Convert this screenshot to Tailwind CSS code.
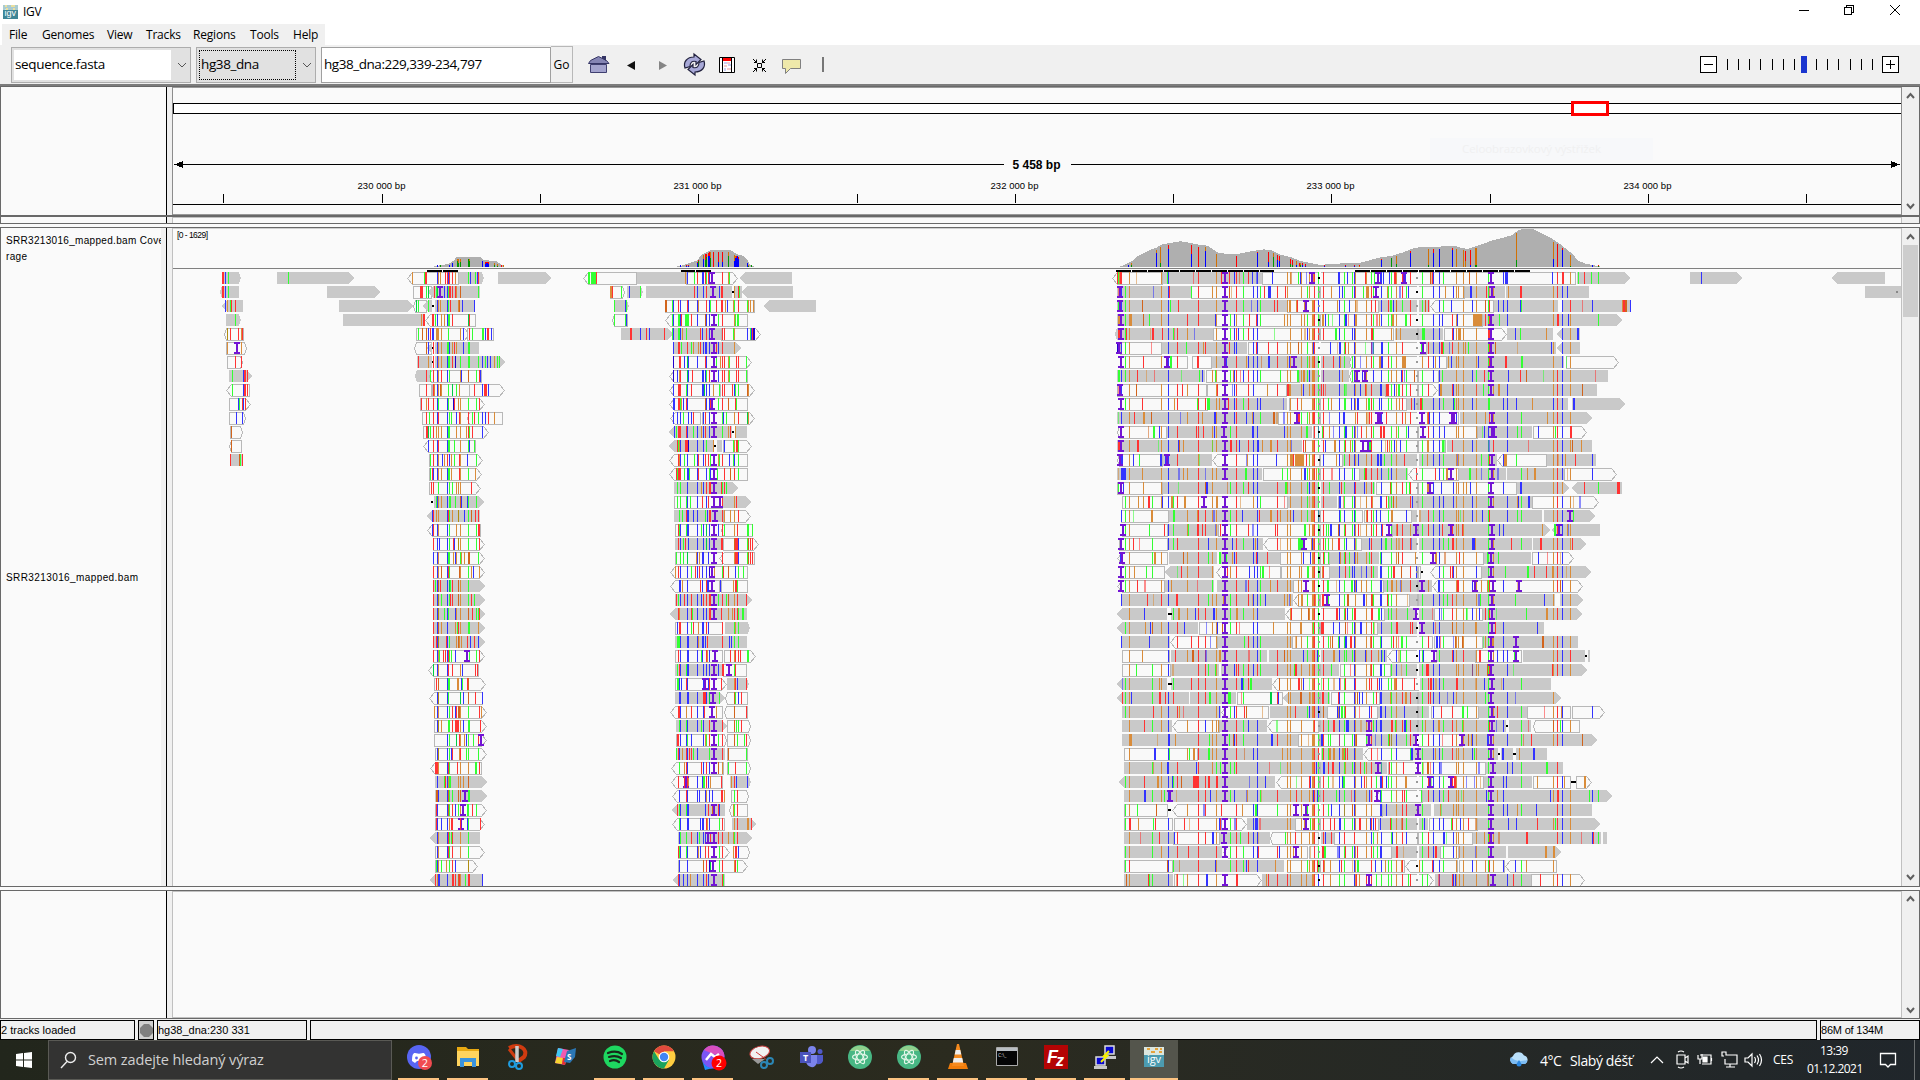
<!DOCTYPE html>
<html lang="cs">
<head>
<meta charset="utf-8">
<title>IGV</title>
<script src="https://cdn.jsdelivr.net/npm/@tailwindcss/browser@4"></script>
</head>
<body class="w-[1920px] h-[1080px] overflow-hidden bg-white text-black flex flex-col font-['Open_Sans','Noto_Sans',sans-serif]">

<!-- Title bar -->
<header class="h-6 shrink-0 flex items-center text-xs">
  <svg class="ml-[3px] mr-[5px]" width="15" height="14" viewBox="0 0 15 14"><rect width="15" height="14" fill="#3d8596"/><path d="M0 0h15v5H0z" fill="#a9cbd0"/><path d="M2 1h2M8 1h4M3 4h2M10 4h2" stroke="#e9dfa0" stroke-width="2"/><text x="1.5" y="11" font-size="9" fill="#fff" font-family="Liberation Sans">igv</text></svg>
  <span class="text-[12px] tracking-[-0.3px]">IGV</span>
  <svg class="ml-auto" width="130" height="24" viewBox="1790 0 130 24" fill="none" stroke="#000" shape-rendering="crispEdges"><path d="M1799 10.5h10M1844.5 7.5h7v7h-7zM1846.5 7V5.500h7v7h-2"/><path d="M1890 5l10 10M1900 5l-10 10" shape-rendering="auto"/></svg>
</header>

<!-- Menu bar -->
<nav class="h-[21px] shrink-0 flex pl-0.5">
  <div class="w-[323px] bg-[#f0f0f0] flex items-center text-[12px] tracking-[-0.2px] pl-[7px]">
    <span class="w-[33px]">File</span><span class="w-[65px]">Genomes</span><span class="w-[39px]">View</span><span class="w-[47px]">Tracks</span><span class="w-[57px]">Regions</span><span class="w-[43px]">Tools</span><span>Help</span>
  </div>
</nav>

<!-- Tool bar -->
<div class="h-[39px] shrink-0 bg-[#f0f0f0] flex items-center text-[13.500px]">
  <div class="ml-[11px] w-[180px] h-9 border border-[#adadad] bg-[#e1e1e1] flex items-center p-0.5">
    <div class="w-[157px] h-[30px] bg-white flex items-center pl-px tracking-[-0.35px]">sequence.fasta</div>
    <svg class="ml-1.5" width="10" height="8" fill="none" stroke="#555"><path d="M1 2l4 4 4-4"/></svg>
  </div>
  <div class="ml-[5px] w-[120px] h-9 border border-[#adadad] bg-[#e1e1e1] flex items-center p-0.5">
    <div class="w-[97px] h-[30px] border border-dotted border-black flex items-center pl-px tracking-[-0.4px]">hg38_dna</div>
    <svg class="ml-1.5" width="10" height="8" fill="none" stroke="#555"><path d="M1 2l4 4 4-4"/></svg>
  </div>
  <div class="ml-[5px] w-[230px] h-9 border border-[#a0a0a0] bg-white flex items-center pl-0.5 tracking-[-0.45px]">hg38_dna:229,339-234,797</div>
  <div class="w-[22px] h-[37px] border border-l-0 border-[#b8b8b8] flex items-center justify-center text-[12px]">Go</div>
  <svg class="ml-3" width="250" height="38" viewBox="585 46 250 38">
    <path d="M590.500 64.500h16v8h-16z" fill="#a3a3cd" stroke="#3f3f70"/><path d="M588.500 63.500l2-3 8-4 8 4 2.500 3z" fill="#8585b4" stroke="#353565" stroke-width="1"/><path d="M602 56h4v5l-4-3z" fill="#353565"/>
    <path d="M627 65.500l8-4.500v9z" fill="#111"/><path d="M667 65.500l-8-4.500v9z" fill="#858585"/>
    <g fill="#a8a9d8" stroke="#22223f" stroke-width="1.200"><path d="M685 68c-2-6 2-11 9-11v-3l7 5.500-5 5v-3c-4-1-6 1-6 5z"/><path d="M704 61c2 6-2 11-9 11v3l-7-5.500 5-5v3c4 1 6-1 6-5z"/></g>
    <path d="M719.500 57.500h15v15h-15z" fill="#fff" stroke="#000"/><path d="M722.500 57v16M731.500 57v16" stroke="#000"/><path d="M723 58h8v3h-8z" fill="red"/><path d="M724 62h3v2h-3zM728 64h3v2h-3zM724 68h2v3h-2z" fill="#c9cdf5"/><path d="M727 62h3v2h-3zM724 65h3v2h-3zM727 68h4v2h-4z" fill="#f5c9cd"/>
    <path d="M757.500 63.500h4v4h-4zM753 59l4 4M766 59l-4 4M753 72l4-4M766 72l-4-4M754 62.500h2.500v-3M765 62.500h-2.500v-3M754 68.500h2.500v3M765 68.500h-2.500v3" fill="none" stroke="#000"/>
    <path d="M782.500 59.500h18v9h-10l-5 5v-5h-3z" fill="#eee8aa" stroke="#808080"/>
    <path d="M822 57h2v15h-2z" fill="#777"/>
  </svg>
  <svg class="ml-auto" width="230" height="38" viewBox="1690 46 230 38" shape-rendering="crispEdges">
    <path d="M1700.500 56.500h16v16h-16zM1882.500 56.500h16v16h-16z" fill="#fff" stroke="#000"/><path d="M1704 64.500h9M1886 64.500h9M1890.500 60v9" stroke="#000"/>
    <path d="M1727.500 59v11M1738.500 59v11M1749.500 59v11M1760.500 59v11M1772.500 59v11M1783.500 59v11M1794.500 59v11M1816.500 59v11M1827.500 59v11M1838.500 59v11M1850.500 59v11M1861.500 59v11M1872.500 59v11" stroke="#000"/>
    <path d="M1801 56h6v17h-6z" fill="#1a35cf"/>
  </svg>
</div>
<div class="h-[3px] shrink-0 bg-[#7c7c7c] border-b border-[#696969]"></div>

<!-- Ideogram and ruler -->
<section class="h-32 shrink-0 flex bg-[#fafafa]">
  <div class="w-[166px] border-l border-[#696969]"></div>
  <div class="w-[7px] bg-[#f0f0f0] border-l border-l-black border-r border-r-[#8c8c8c]"></div>
  <svg width="1728" height="128" viewBox="173 87 1728 128" shape-rendering="crispEdges" font-family="Liberation Sans, Arial, sans-serif">
    <path d="M173 87.500h1728M173 214.500h1728" stroke="#999"/>
    <rect x="173.500" y="103.500" width="1728" height="10" fill="#fff" stroke="#000"/>
    <rect x="1572.500" y="102.500" width="35" height="12" fill="#fff" stroke="red" stroke-width="3"/>
    <rect x="1430" y="138" width="223" height="22" fill="#f7f8fa"/><text x="1462" y="153" font-size="11.500" fill="#f0f0f1" font-family="Open Sans" textLength="139">Celoobrazovkový výstřižek</text>
    <path d="M174 164.500h830M1071 164.500h829M173 204.500h1728" stroke="#000"/>
    <path d="M174 164.500l9-3.500v7zM1900 164.500l-9-3.500v7z"/>
    <text x="1036.500" y="169" font-size="12" font-weight="bold" text-anchor="middle" textLength="48">5 458 bp</text>
    <g id="ruler" font-size="9.500" text-anchor="middle"></g>
  </svg>
  <div class="w-[19px] bg-[#f0f0f0] border-l border-[#8c8c8c] border-r border-r-[#696969] flex flex-col justify-between items-center py-[5px]">
    <svg width="9" height="8" fill="none" stroke="#606060" stroke-width="2"><path d="M1 6l3.500-4L8 6"/></svg>
    <svg width="9" height="8" fill="none" stroke="#606060" stroke-width="2"><path d="M1 2l3.500 4L8 2"/></svg>
  </div>
</section>
<div class="h-0.5 shrink-0 bg-[#696969]"></div>
<div class="h-[7px] shrink-0 flex bg-[#fafafa] border-b border-[#696969]">
  <div class="w-[166px] border-l border-[#696969]"></div><div class="w-[7px] bg-[#f0f0f0] border-l border-l-black border-r border-r-[#c0c0c0]"></div><div class="w-[1728px] border-t border-[#c0c0c0]"></div><div class="w-[19px] bg-[#f0f0f0] border-x border-[#696969] border-l-[#c0c0c0]"></div>
</div>
<div class="h-1 shrink-0 bg-[#fafafa] border-b border-[#696969]"></div>

<!-- Tracks -->
<section class="h-[658px] shrink-0 flex bg-[#fafafa]">
  <div class="w-[166px] border-l border-[#696969] flex font-['Liberation_Sans',Arial,sans-serif]">
    <svg class="bg-[#fafafa]" width="160" height="658" viewBox="1 228 160 658" font-size="10" fill="#000">
      <text x="6" y="244" textLength="158">SRR3213016_mapped.bam Cove</text>
      <text x="6" y="260" textLength="21">rage</text>
      <text x="6" y="581" textLength="132">SRR3213016_mapped.bam</text>
    </svg>
    <div class="flex-1 bg-[#f0f0f0]"></div>
  </div>
  <div class="w-[7px] bg-[#f0f0f0] border-l border-l-black border-r border-r-[#c0c0c0]"></div>
  <svg id="tracks" width="1728" height="658" viewBox="173 228 1728 658" shape-rendering="crispEdges"></svg>
  <div class="w-[19px] bg-[#f0f0f0] border-l border-[#c0c0c0] border-r border-r-[#696969] flex flex-col items-center py-[5px]">
    <svg width="9" height="8" fill="none" stroke="#606060" stroke-width="2"><path d="M1 6l3.500-4L8 6"/></svg>
    <div class="mt-1 w-[15px] h-[72px] bg-[#cdcdcd]"></div>
    <svg class="mt-auto" width="9" height="8" fill="none" stroke="#606060" stroke-width="2"><path d="M1 2l3.500 4L8 2"/></svg>
  </div>
</section>
<div class="h-[5px] shrink-0 bg-[#fafafa] border-y border-[#696969]"></div>

<!-- Empty feature panel -->
<section class="h-[127px] shrink-0 flex bg-[#fafafa]">
  <div class="w-[166px] border-l border-[#696969]"></div>
  <div class="w-[7px] bg-[#f0f0f0] border-l border-l-black border-r border-r-[#c0c0c0]"></div>
  <div class="w-[1728px] border-y border-[#c0c0c0]"></div>
  <div class="w-[19px] bg-[#f0f0f0] border-l border-[#c0c0c0] border-r border-r-[#696969] flex flex-col justify-between items-center py-[4px]">
    <svg width="9" height="8" fill="none" stroke="#606060" stroke-width="2"><path d="M1 6l3.500-4L8 6"/></svg>
    <svg width="9" height="8" fill="none" stroke="#606060" stroke-width="2"><path d="M1 2l3.500 4L8 2"/></svg>
  </div>
</section>
<div class="h-0.5 shrink-0 bg-[#696969] border-b border-[#f0f0f0]"></div>

<!-- Status bar -->
<footer class="h-5 shrink-0 bg-[#f0f0f0] flex gap-[3px] font-['Liberation_Sans',Arial,sans-serif] text-[11px] leading-[18px] whitespace-nowrap">
  <div class="w-[135px] border border-black">2 tracks loaded</div>
  <div class="w-4 border border-black flex items-center justify-center bg-[#d0d0d0]"><svg width="13" height="15"><path d="M4 1h5l4 4v5l-4 4H4L0 10V5z" fill="#808080"/></svg></div>
  <div class="w-[150px] border border-black">hg38_dna:230 331</div>
  <div class="w-[1507px] border border-black"></div>
  <div class="flex-1 border border-black tracking-[-0.2px]">86M of 134M</div>
</footer>

<!-- Task bar -->
<div class="h-10 shrink-0 flex bg-linear-to-r from-[#22261c] via-[#2b2b1f] to-[#20262b] text-white">
  <div class="w-12 flex items-center justify-center"><svg width="16" height="16" fill="#fff"><path d="M0 2l7-1v6.500H0zM8 1l8-1v7.500H8zM0 8.500h7V15l-7-1zM8 8.500h8V16l-8-1z"/></svg></div>
  <div class="w-[344px] bg-[#333332] border border-[#5a5a55] flex items-center text-[14.500px] text-[#d0d0d0]">
    <svg class="ml-[11px] mr-[11px]" width="17" height="18" fill="none" stroke="#eee" stroke-width="1.400"><circle cx="10.500" cy="6.500" r="5"/><path d="M7 10.500L1 17"/></svg>
    <span class="tracking-[-0.12px]">Sem zadejte hledaný výraz</span>
  </div>
  <div id="apps" class="flex ml-[2px]">
    <div class="w-[49px] px-1 flex flex-col items-center justify-end"><svg width="28" height="30" viewBox="-14 -14 28 30"><circle r="12" cy="0" fill="#5865f2"/><path d="M-7 4c0-6 1-8 3-8l4 .8 4-.8c2 0 3 2 3 8l-3 2-2-2h-4l-2 2z" fill="#fff"/><circle cx="-2.500" cy="1" r="1.400" fill="#5865f2"/><circle cx="6" cy="6" r="7" fill="#f04b50"/><text x="6" y="10" font-size="11" fill="#fff" text-anchor="middle">2</text></svg><div class="h-0.5 w-full mt-[5px] bg-[#fcc381]"></div></div>
    <div class="w-[49px] px-1 flex flex-col items-center justify-end"><svg width="28" height="30" viewBox="-14 -14 28 30"><path d="M-11-10h9l2 2h11V9h-22z" fill="#e8a912"/><path d="M-11-6h22V9h-22z" fill="#ffd45e"/><path d="M-8 10V1H8v9H4V5h-8v5z" fill="#3a93dc"/></svg><div class="h-0.5 w-full mt-[5px] bg-[#fcc381]"></div></div>
    <div class="w-[49px] px-1 flex flex-col items-center justify-end"><svg width="28" height="30" viewBox="-14 -14 28 30"><path d="M-8-9C2-14 12-8 7 0L0 5" fill="none" stroke="#cf3b10" stroke-width="4"/><path d="M-8-8L3 6" stroke="#cf3b10" stroke-width="3"/><path d="M0-11V5" stroke="#ccc" stroke-width="3.500"/><circle cx="-5" cy="7" r="3" fill="none" stroke="#1f9cdf" stroke-width="2"/><circle cx="2" cy="9" r="3" fill="none" stroke="#1f9cdf" stroke-width="2"/></svg><div class="h-0.5 mt-[5px]"></div></div>
    <div class="w-[49px] px-1 flex flex-col items-center justify-end"><svg width="28" height="30" viewBox="-14 -14 28 30"><path d="M-8-9L3-7-1 8-11 6z" fill="#f05ab0"/><path d="M-8-9l5 1-3 8-4-1z" fill="#3fc8f5"/><path d="M-9 0l6 1-1 6-7-1z" fill="#f6d52f"/><path d="M-3 1h3l-1 7-3-1z" fill="#e8302c"/><path d="M1-6l9-3-1 9-5 6-6-1z" fill="#2b77b5"/><text x="1" y="3" font-size="8" font-weight="bold" fill="#fff">S</text></svg><div class="h-0.5 mt-[5px]"></div></div>
    <div class="w-[49px] px-1 flex flex-col items-center justify-end"><svg width="28" height="30" viewBox="-14 -14 28 30"><circle r="11.500" fill="#1ed760"/><path d="M-7-4q8-3 14 1M-6 0q7-2 12 1M-5 4q5-2 9 1" fill="none" stroke="#18281b" stroke-width="2.200" stroke-linecap="round"/></svg><div class="h-0.5 w-full mt-[5px] bg-[#fcc381]"></div></div>
    <div class="w-[49px] px-1 flex flex-col items-center justify-end"><svg width="28" height="30" viewBox="-14 -14 28 30"><circle r="11.500" fill="#ffcd40"/><path d="M0 0L-10-5.700A11.500 11.500 0 0 1 10-5.700H0z" fill="#e04a3d"/><path d="M-10-5.700A11.500 11.500 0 0 0 0 11.500L5 2.800-5 2.500z" fill="#1ba35d"/><circle r="5.300" fill="#fff"/><circle r="4.200" fill="#4285f4"/></svg><div class="h-0.5 w-full mt-[5px] bg-[#fcc381]"></div></div>
    <div class="w-[49px] px-1 flex flex-col items-center justify-end"><svg width="28" height="30" viewBox="-14 -14 28 30"><circle r="11.500" fill="#7b56f5"/><path d="M-9-7A11.500 11.500 0 0 1 11.500 0L0-3z" fill="#d84fc0"/><path d="M-11 3A11 11 0 0 0 0 11l-8 2z" fill="#1f8cff"/><path d="M-7 3l5-6 4 3 4-3" stroke="#fff" stroke-width="2.500" fill="none"/><circle cx="6" cy="6" r="7.500" fill="#f00"/><text x="6" y="10" font-size="10.500" fill="#fff" text-anchor="middle">2</text></svg><div class="h-0.5 w-full mt-[5px] bg-[#fcc381]"></div></div>
    <div class="w-[49px] px-1 flex flex-col items-center justify-end"><svg width="28" height="30" viewBox="-14 -14 28 30"><ellipse cx="-1" cy="-5" rx="10" ry="6" fill="#f1f1f1" stroke="#c94040" transform="rotate(-15)"/><path d="M-10 2l13 0-7 5z" fill="#999"/><path d="M-6-5L5 3" stroke="#c33"/><circle cx="2" cy="8" r="3" fill="none" stroke="#2b86b5" stroke-width="2"/><circle cx="8" cy="4" r="3" fill="none" stroke="#2b86b5" stroke-width="2"/></svg><div class="h-0.5 mt-[5px]"></div></div>
    <div class="w-[49px] px-1 flex flex-col items-center justify-end"><svg width="28" height="30" viewBox="-14 -14 28 30"><circle cx="1" cy="-7" r="4" fill="#7b83eb"/><circle cx="9" cy="-5.500" r="2.500" fill="#5059c9"/><path d="M5-2h7v6q-2 4-6 3z" fill="#5059c9"/><path d="M-5-2H6v8q-2 5-6 4t-5-5z" fill="#7b83eb"/><path d="M-11-5H0V6h-11z" fill="#4b53bc"/><text x="-5.500" y="4" font-size="9" font-weight="bold" fill="#fff" text-anchor="middle">T</text></svg><div class="h-0.5 mt-[5px]"></div></div>
    <div class="w-[49px] px-1 flex flex-col items-center justify-end"><svg width="28" height="30" viewBox="-14 -14 28 30"><circle r="12" fill="#48b784"/><path d="M-10-6A12 12 0 0 1 10-6z" fill="#8fd08c"/><g fill="none" stroke="#e4f7e9" stroke-width="1.200"><ellipse rx="7.500" ry="3"/><ellipse rx="7.500" ry="3" transform="rotate(60)"/><ellipse rx="7.500" ry="3" transform="rotate(120)"/></g></svg><div class="h-0.5 mt-[5px]"></div></div>
    <div class="w-[49px] px-1 flex flex-col items-center justify-end"><svg width="28" height="30" viewBox="-14 -14 28 30"><circle r="12" fill="#48b784"/><path d="M-10-6A12 12 0 0 1 10-6z" fill="#8fd08c"/><g fill="none" stroke="#e4f7e9" stroke-width="1.200"><ellipse rx="7.500" ry="3"/><ellipse rx="7.500" ry="3" transform="rotate(60)"/><ellipse rx="7.500" ry="3" transform="rotate(120)"/></g></svg><div class="h-0.5 w-full mt-[5px] bg-[#fcc381]"></div></div>
    <div class="w-[49px] px-1 flex flex-col items-center justify-end"><svg width="28" height="30" viewBox="-14 -14 28 30"><path d="M-8 6H8l2 6h-20z" fill="#f07c0a"/><path d="M-1-13h2L6 9H-6z" fill="#f58a1e"/><path d="M-2.300-7h4.600l1 4.500h-6.600zM-4.200 1h8.400l1 4.500H-5.200z" fill="#eee"/></svg><div class="h-0.5 w-full mt-[5px] bg-[#fcc381]"></div></div>
    <div class="w-[49px] px-1 flex flex-col items-center justify-end"><svg width="28" height="30" viewBox="-14 -14 28 30"><path d="M-10.500-9.500h21v18h-21z" fill="#050505" stroke="#aaa"/><path d="M-10-9h20v3h-20z" fill="#b9bec2"/><text x="-9" y="-.5" font-size="5" fill="#ddd">C:\_</text></svg><div class="h-0.5 w-full mt-[5px] bg-[#fcc381]"></div></div>
    <div class="w-[49px] px-1 flex flex-col items-center justify-end"><svg width="28" height="30" viewBox="-14 -14 28 30"><path d="M-12-12h24v24h-24z" fill="#b40404"/><text x="-9" y="6" font-size="18" font-weight="bold" font-style="italic" fill="#fff" font-family="Liberation Sans">F</text><text x="0" y="9" font-size="16" font-weight="bold" font-style="italic" fill="#fff" font-family="Liberation Sans">z</text></svg><div class="h-0.5 w-full mt-[5px] bg-[#fcc381]"></div></div>
    <div class="w-[49px] px-1 flex flex-col items-center justify-end"><svg width="28" height="30" viewBox="-14 -14 28 30"><g stroke="#ddd" stroke-width="1.500" fill="#0808d0"><path d="M0-11h9v8H0zM-9 0h9v8h-9z"/></g><path d="M0-1h11v3H0zM-11 9H2v3h-13z" fill="#c8c8c8"/><path d="M4-6L-1-1l3 0-6 6" stroke="#f6f000" stroke-width="2" fill="none"/></svg><div class="h-0.5 w-full mt-[5px] bg-[#fcc381]"></div></div>
    <div class="w-12 ml-px bg-[#54554c] flex flex-col items-center justify-end"><svg width="28" height="30" viewBox="-14 -14 28 30"><path d="M-10-10h20v20h-20z" fill="#4c9bb0"/><path d="M-10-10h20v8h-20z" fill="#dbe6df"/><path d="M-7-8h3M1-8h3M6-8h2M-3-5h4M5-5h3" stroke="#e5a33c" stroke-width="2"/><text y="6" font-size="11" fill="#fff" text-anchor="middle">igv</text></svg><div class="h-0.5 w-full mt-[5px] bg-[#fcc381]"></div></div>
  </div>
  <div class="ml-auto flex items-center text-[14px] whitespace-nowrap">
    <svg class="mr-2.5" width="22" height="18"><path d="M5 13a4.500 4.500 0 0 1 0-8A6 6 0 0 1 16 4.500a4.500 4.500 0 0 1 1 8.500z" fill="#b9dffa"/><path d="M5 13a4.500 4.500 0 0 1-2-7q5 6 16 3a4 4 0 0 1-2 4z" fill="#7dbcf3"/><path d="M11 9l2.500 4a2.500 2.500 0 1 1-5 0z" fill="#2a86df"/></svg>
    <span class="w-[30px] tracking-[-0.5px]">4°C</span><span class="w-[80px] tracking-[-0.4px]">Slabý déšť</span>
    <svg width="115" height="20" viewBox="1650 1050 115 20" fill="none" stroke="#fff" stroke-width="1.200"><path d="M1651 1063l6-6 6 6M1677 1055h8v9h-8zM1685 1058l3-2v7l-3-2M1678 1052q3-2 6 0M1678 1067q3 2 6 0M1700 1055h11v9h-9M1711.500 1058v3M1698 1055v4h4v-5M1700 1059v5M1724 1056h-2v-4h4v3h11v9h-12v-5M1730 1064v3M1726 1067h9M1745 1058h3l4-4v12l-4-4h-3zM1754.500 1057q2 3 0 6M1757 1055.500q3 4.500 0 9M1759.500 1054q4 6 0 12"/><path d="M1703 1057h4v5h-4z" fill="#fff"/></svg>
    <span class="ml-2 text-[12px] w-[34px] tracking-[-0.3px]">CES</span>
    <div class="w-[54px] text-center text-[12px] leading-[18px] tracking-[-0.55px]">13:39<br>01.12.2021</div>
    <svg class="ml-[18px] mr-[17px]" width="18" height="18" fill="none" stroke="#fff" stroke-width="1.300"><path d="M1.500 2.500h15v11h-5l-2.500 2.500-2.500-2.500h-5z"/></svg>
    <div class="h-10 w-px bg-[#6b6f70] mr-[5px]"></div>
  </div>
</div>

<script>
// Ruler: a tick every 500 bp, a label every 1000 bp.
let ruler = '';
[223,382,540,698,857,1015,1173,1331,1490,1648,1806].forEach((x, i) => {
  ruler += `<path d="M${x + .5} 194v9" stroke="#000"/>`;
  if (i % 2) ruler += `<text x="${x - .5}" y="189" textLength="48">${230 + (i - 1) / 2} 000 bp</text>`;
});
document.getElementById('ruler').innerHTML = ruler;

const COLORS = {r:'#f33', g:'#3f3', b:'#33f', o:'#d98c3a', t:'#d2641c', n:'#0c4', k:'#000', d:'#20c', y:'#b08c10'};
const ROW_TOP = 272, ROW_PITCH = 14;
let out = '';
const rect = (x, y, w, h, f, o) => { out += `<rect x="${x}" y="${y}" width="${w}" height="${h}" fill="${f}"${o ? ` opacity="${o}"` : ''}/>`; };
let seed = 4177;
const rnd = () => (seed = (seed * 16807) % 2147483647) / 2147483647;

// Coverage profile: x and height in thirds of a pixel from an origin.
function coverage(origin, pts, marks) {
  const h = x => { for (let i = 1; i < pts.length; i++) if (x <= pts[i][0]) { const [a, b] = [pts[i-1], pts[i]]; return b[1] + (a[1] - b[1]) * (b[0] - x) / (b[0] - a[0]); } return 0; };
  for (let x = pts[0][0]; x < pts[pts.length - 1][0]; x += 3) { const v = Math.max(1, Math.round(h(x) / 3)); rect(origin + Math.round(x / 3), 267 - v, 1, v, '#afafaf'); }
  const C = {r:'#f00', b:'#00f', n:'#009600', o:'#d17105'};
  marks.split(' ').forEach(m => { const [, a, b, x, f] = m.match(/([a-z])([a-z])(\d+)\.(\d)/); const v = Math.max(2, Math.round(h(+x) / 3) - 2), X = origin + Math.round(x / 3), k = Math.round(v * f / 10); rect(X, 267 - v, 1, v, C[a]); rect(X, 267 - k, 1, k, C[b]); });
}
coverage(160, [[822,2],[845,6],[865,10],[880,20],[888,29],[960,29],[970,21],[1010,17],[1020,8],[1032,1]], 'bb831.9 nn840.9 bb867.9 ob876.9 on891.7 on894.5 on900.6 nn924.9 on927.8 bb966.9 rb975.6 rb978.8 rb981.8 rb984.5 on1002.6 on1011.4 rr1023.9 oo1029.9');
coverage(580, [[290,2],[305,5],[325,12],[350,20],[360,36],[372,42],[388,50],[450,50],[465,40],[490,32],[500,22],[505,9],[520,2]], 'bb300.9 rb318.6 rb324.4 rb351.8 rn354.8 ob369.7 rn375.5 rn378.8 rb384.8 rb387.7 on390.6 rr399.9 rb414.3 rb426.3 on444.7 ob462.5 ob465.8 rb468.8 bb471.9 rb474.8 bb501.9 on504.3 nn513.9');
coverage(1100, [[60,1],[80,10],[95,18],[105,28],[125,40],[150,52],[168,58],[185,68],[210,72],[240,77],[270,72],[300,66],[320,64],[333,56],[350,44],[375,40],[410,39],[440,45],[470,50],[490,53],[515,50],[540,37],[575,28],[600,18],[640,10],[660,6],[690,9],[730,11],[780,13],[805,19],[830,27],[875,34],[905,43],[935,55],[960,60],[1010,60],[1035,63],[1060,64],[1080,58],[1100,54],[1120,60],[1150,70],[1175,80],[1210,88],[1235,96],[1250,108],[1262,113],[1300,113],[1320,102],[1350,88],[1370,75],[1390,60],[1410,44],[1435,18],[1455,10],[1480,5],[1500,1]],
 'bb84.9 on93.4 ob168.8 on180.2 rb204.8 rb273.6 rr294.9 ob315.8 oo348.9 rr408.9 rb471.9 rb504.3 on519.7 rb531.6 rb537.5 rn570.4 rn576.3 ob588.4 ro597.3 on600.5 rb606.5 rb615.4 rb672.4 rb735.5 rb762.5 ro777.3 rb844.9 nn874.9 on889.3 rb931.9 on985.1 rb1000.8 bb1018.9 rb1057.9 oo1069.9 oo1090.9 ro1096.4 rb1111.1 on1126.1 on1129.1 on1249.2 ob1360.3 rr1372.9 rb1387.9 on1411.1 bb1477.9 rn1495.3');
rect(173, 228, 1728, 1, '#d0d0d0');
rect(173, 268, 1728, 1, '#808080');
[[427,442],[443,458],[681,695],[696,711]].forEach(([a, b]) => rect(a, 270, b - a, 2, '#000'));
for (let x = 1116; x < 1274; x += 16) rect(x, 270, Math.min(15, 1274 - x), 2, '#000');
for (let x = 1355; x < 1529; x += 16) rect(x, 270, 15, 2, '#000');

// One row of reads. Spans are g/w (plain / ambiguous) with start-end and arrow
// marks; the rest are mismatches (colour, x, .width), I insertions, k gaps.
function readRow(row, origin, text) {
  const y = ROW_TOP + row * ROW_PITCH, spans = [];
  const marks = [];
  text.trim().split(/\s+/).forEach(t => {
    let m = t.match(/^([gw])(-?\d+)-(\d+)([<>{}]*)$/);
    if (m) {
      const a = origin + Math.round(m[2] / 3), b = origin + Math.round(m[3] / 3);
      const l = m[4].includes('<') ? 5 : m[4].includes('{') ? 2 : 0, r = m[4].includes('>') ? 5 : m[4].includes('}') ? 2 : 0;
      spans.push([a + l, b - r]);
      if (m[1] === 'g') out += `<path d="M${a + l} ${y}H${b - r}L${b} ${y + 6}L${b - r} ${y + 12}H${a + l}L${a} ${y + 6}z" fill="#c9c9c9"/>`;
      else out += `<path d="M${a + l + .5} ${y + .5}H${b - r - .5}L${b - .5} ${y + 6.5}L${b - r - .5} ${y + 12.5}H${a + l + .5}L${a + .5} ${y + 6.5}z" fill="#f9f9f9" stroke="#b8b8b8"/>`;
    } else marks.push(t);
  });
  return { y, spans, marks };
}
function drawMarks(row, origin, marks) {
  const y = ROW_TOP + row * ROW_PITCH;
  marks.forEach(t => {
    const m = t.match(/^([a-zI])(\d+)(?:\.(\d))?$/);
    if (!m) return;
    const x = origin + Math.round(m[2] / 3);
    if (m[1] === 'I') { rect(x - 1, y, 2, 12, '#7314d4'); rect(x - 3, y, 6, 2, '#7314d4'); rect(x - 3, y + 10, 6, 2, '#7314d4'); }
    else if (m[1] === 'k') { rect(x - 1, y, 3, 12, '#fafafa'); rect(x - 1, y + 5, m[3] || 2, 2, '#000'); }
    else rect(x, y, +(m[3] || 1), 12, COLORS[m[1]]);
  });
}
const inside = (spans, x) => spans.some(([a, b]) => x >= a && x < b - 1);

// Fully listed rows: groups at 229.5, 230 kb (origin 160) and 231 kb (origin 580).
const left = [
 'g186-242} r186.2 r189 b195 g205 g351-582> g384 w740-898< g898-971} g1014-1173> o756 g793 r796.2 b831 o834 o840 r855 r861 b865 r867 r876 o885 g924 b931 g945 b951 r954',
 'g180-237{ r186.2 r189 b195 g205 g501-659> w760-817 g805-959< r780.3 g798 n804 r822 g829 n832 b852 b861 g864 r867.2 r876 r885 o888 t900 g954 I839',
 'g186-249< b195 o201 g209 r213 r225 g537-758> w758-802{ n768 g774 g790-944< g804 k818 b831 o834 o840 b861 g864 r870 o894 t897 b906 b942',
 'g198-242} g225 g549-795 o783 r789 r793 w795-947< r816.2 g825 b831 o843 o852 b861 g864.2 r876 n924 r927',
 'w193-251{ y201 r210 r234 o243 r246 w768-930> w920-1001 g774 t786 t798 b804 r810 b816.2 o828.2 o834 o843 g864 o900 b909 r927 g936 g966.2 b975 r981.2 b993',
 'w198-260} o201 o243 I231 w763-815{ t798 b804 g800-957< k818 r819 b831.2 o834 o843 g861.2 b867 o876 r882 o888 b909 g924.2',
 'w201-250} r225 r243 g771-1034> r774 o804 k818 r819 b831 o834 o843 b861 g864.2 r876 d885 g900 g924.2 g954 b966 g975 b981 b990 o1002 g1011 g1017',
 'g207-276> g216 b249 r252.2 r261 g765-815{ r798 g810 w807-965{ r819 b831 o834 r843 b861 g867 o900 b903 t924 g948 r957 b960',
 'w199-269< g216 b249 r252.2 r261 w777-817 r798 w817-930 w928-1034> r819 o822 b831 o834 t840 o843 g864 n876 g888 o897 r942 b966 r972.3 b984',
 'w207-273> b234 g237 r246 b249 r255 w780-976> r783 o798 r804 r819 b831 g834 b861 g864 d879 r882 o894 o900 g924 g948 r957',
 'w207-257} b228 b246 w786-930 w922-1030{ r798 g807 r819 b831 r834 b861 g867 g873 b888 r897 o900 r924 g936 r942 g954 b966 b975 r984 o1002',
 'w210-248} t213 w789-986> r798.2 n804 g810 r819 o828 o834 o843 b861 g864.2 o888 o900 o918 r924 g927 r936 b966',
 'w207-245{ t213 w790-947< b804 r819 b831 r834 b861 g864.2 g882 o900 b927 g924 g942',
 'g210-248 r210 t237 g240 r246 w807-968> g810 r819 b831 o834 b846 o852 r861 b867 o873 g882 r897 o900 b921 g948',
 'w807-965> g810 r816 b819 b831 o834 o843 b861 g864.2 o873 r897 o900 g924 o945'];
const mid = [
 'w10-170< g24.2 g33.2 g39.3 r48 g170-320 w318-475> g479-636< o315 b321 g342 r351 b366.2 r375 g378 r384 b387 r426 o444 g447 I397',
 'w90-134} o90.2 r96 g123 g141-188} b147 g180 g198-340 g328-487 g485-639< r342 b351 b369 r378 b417 r423.2 k460 o462 r474 g477 I399',
 'g102-146} g102 b135 g138 w255-525 g553-708< t255 t258 g276 b279 r294 b300 r321 b324 b351 o354 r378 b387 g390 r408 r423.2 o435 b441 o459 g462 r474 g501 o504 o510 o519',
 'w97-143{ g102 g135 b138 w256-503< g276 b279 g294.2 b300 r303 g315.4 r333 b351 t375 b378 b387 g414 r426 o462 g465 g471.2 I402',
 'g123-280> r150.2 b180 r198 b207 r252 g276-425 w423-542> g276 b279 g294.2 b300 o306 g318 r360 b366 r378 b387 r426 r432 g459 o462 b501 g510 b513 d519.2 r516 I397',
 'g279-483> b279 r294.2 g303 r321 g333 o339 o354 r360 b369 b375.2 b387 r408 b414 r426 o462 I402',
 'w279-515> d279 r297 r300 b312 n321 b324 b351 r375 b378 r399 g408 o420 r426 r432 o444 g447 r468 r474 g498 I402',
 'w268-503< d279 b291 o297 r300 n321 b324 r336 b366.2 b375 g378 r387 b414 r426 r432 o444 g447 r468 r474 g498 I402',
 'w268-422< w425-524> b279 r294.2 r300 g318 b321 r333 b366.2 n372 b378 b387 o399 g417 r426 r432 r456 b462 g465 g474 t501 o504',
 'w268-503< b279.2 r294.2 g300 o303 b309 r318 b321 t375 b378 b387 r390 g414 r426 t444 r465 g468 I397',
 'w270-362< w366-524> b279 b291 b300 g309 b324 b333 r339 b369 r375 b387 g426 b429 g438 o462 r474 n501 o504 I402',
 'g268-501< b282 g288 r294.2 r300 r318 b321 g339 b351 o363 b369 r375 b387 g426 o444 r450 k460 o465 I402',
 'g268-427< w429-515> r291 g294 o297 b300 r315.3 d324 b351 b369 g378 o399 k404 b432 g459 o462 r468.2 g474',
 'w268-503< r294 o297 b300 g312 b321 g342 b351 r354 b369 r375 r384 g390 o414 g417 r426 b447 g459 b462 g474 I402',
 'w268-503< r288 g291 r294.2 r300 g312 b321.2 g327 b351 r354 b378 g387 b390 g411 r432 t450 r462 g474 I402'];
left.forEach((t, r) => drawMarks(r, 160, readRow(r, 160, t).marks));
mid.forEach((t, r) => drawMarks(r, 580, readRow(r, 580, t).marks));

// The same two groups from row 15 down, on one origin.
const lower = [
 'w58-214> r63 r69 g84 b111 g117 g126 o138 o145 o151 r183 g792-983> g801 g811 b832 b862 o874 b880 r889 r897.2 r933 g936 r942 g949 I911',
 'g69-221> k66 g78 b82 o85 o94 b111 g117.2 g135 t151 b154 b172 g175 g199 w792-940 g940-1022> g801 g811 g829 b832 g841 b862 r877 b889 r895 r936 o973 r979 I911 I930',
 'g52-210< b66 r69 o78 o84 b111 r114 g117 o126 y145 b163 g175 t184 r196 r205 g792-938 w938-1024> g808 g817 r829 b832.2 b850 b862 g886 b892 r897.2 r936 o943 o961 o973 r985 I915',
 'w52-212< b66 r69 b82 o85 b111 g117 o138 o151 g175 g199 r205.2 w795-940 w932-1030{ r804 g808 b811 g829 b832.2 b862 g874 b880 n889 b897 b925 r936 g943 o973 r982 g1012.2 g1027 I911',
 'w69-226> r69 b81 b87 b111 g117 r129 b133 y145 o151 g175 g199 r208 g795-938 w940-1048> r804 b811 g820 r826 b835 b862 b880 n889 b897 r933.2 t973 r975.3 b985 g1012 t1015 r1021 r1027 I911',
 'w69-226> b69 b82 o85 b111 g114 g117 o129 b135 o138 g151 o154 o163 t175.2 g205 w795-938 w926-1034< g798 g811 g820 n832 o859 b862 o868 b877.2 b895 r936 o973 r976.3 b985 g1012 t1015 r1021 r1027 I911',
 'w69-226> r69 b82 o85 t94 b111 r114 g117 t147 o151 g175 o184 b190 o208 w781-1013< o796 r804 b811 b832 g844 r856 b862 r868 b877 b889 d897 o912 g936 r940 t955 b976 g985 g1000 I905',
 'g69-224> r69 g75 b82 t85 r91 b111 n117 g120 r126 t145 o151 g175 w781-930< w932-1013 b808 b811 o817 b832 r871 b877 r889 b892 b895 b931 o970 r976.2 g982 I905',
 'g69-224> r69 b82 y85 g94 b111 g117 r120 r126 t145 o151 g175 r184 g193 g795-1025> r799 g805 b811 r823 b832 r844 b862 b874 r880 r889 r897.2 g925 r936 g949 t955 o973 r982 r1009 I911',
 'g69-224> r69 b82 y85 g102 b111 g114 b135 o138 o151 t175 r187 g199 g205 r208 g781-1010< r804 o808 b832 r844 g847 b862 b880 b889 r897.2 r933 o955 o967 r973 r982 g985 g997.2 I911',
 'g69-224> r69 b82 t85 o94 b111 o136 g142 r145 o151 g175.2 o205 w795-940 g945-1019} b802 r808.2 b832 g844 r850 o865 b877.2 r889 b895 r936 g973 o976 g985',
 'g69-224> r69 r78 b82 y85 r109 b111 g117 o139 t145 o148 o154 r172 b181 r193 b205 g795-1010 g801 g805.2 b811 b832.2 b862 o865 b877.2 b886 r892 r936 b958 b964 g973 g985',
 'w69-226> r69 b82 o85 g87 r100 r106 b111 r114 g118 g124 b136 g178 g199 r208 I171 w795-940 w943-1037> r804 b811 b832 b835 b862 g874 b877 r889 o892 b897 r961 o973 r976 r985 r991 g1012.2 I914',
 'w55-206< n69 b82 o85 b111 r114 r127 o151 b157 r196 r202 g795-938 w940-1010 g802 r808 b811 g829 b832.2 b862 b880 b889 b897 b925 r936.2 g973 r976 I911 I957',
 'w72-229> r78 t85 b111 g114.2 o141 o145 b154 g157 r172 t175 w795-950> g951-1018} g802.2 b808 b812 r829 b832 b880 b895 r897 r933 o973 r976 b982 r1009 I886 I911',
 'w58-220< b82 y85 b111 g114 n151 b160 t175 r196 b217 g795-945> w945-1013{ b808 b811 b832.2 b862 r880.3 b889 n897 g928 t973 g976 b985 r994 I908',
 'w72-232> o72 b82 o85 b111 g117 r126 b135 r139 t145.2 o151 g175 r208 o214 w781-938< w943-1013{ r804.2 b811 o829 r844 b862 b880 r883 o919 t973 r1009 I905',
 'w72-232> b82 y85 o94 g114.2 r126 r136.4 o151 b160 g175.2 r211 g798-950> w951-1022} g808 b811 g829 b832 b862 g874 b880 r897 r936 t973 g979 g985 r994 I911',
 'w72-232> b111 g117 n139 r148 o151 o163 b169 g175 g190 r205 g214 I213 w798-950} w951-1022} r802 r804 b811 b829 g832 b844 b880 o886 g889 r897 g925 r936 t973 g982 g1003 r1009 I911',
 'w75-232> b82 y85 b111 g117 b123 r127 o148 r151 g169 g175 g205 g798-945 w951-1013 g799 r804 b808 o817 r829 b832 r838 r844 g850 b862 g898 r936 t955 g1009 I911',
 'w61-217< r75.3 o84 b111 r114 g117 r142 o151 o175 g195.2 r208 w784-943< w951-1022} g808 o823 r829 b832 r874 b880 r889 b897 t925 o936 g955 r976 g1009 I911',
 'g75-230> b82 g102 r106 b111 o114 g117.2 o145 o151 o160 t175 w784-940< g960-1022} r805 o835 b862 b877 g880.2 r889 b895 o900 r933 o964 r973 b979 b1012 I827 r822 r832',
 'g75-230> t78.2 b85 b111 t114 g117 g126 t145 t151 g175.2 I165 w787-946< w963-1018} b808 r829 b832 b862 b868 b886 o889 b897 b907 r933 r936 o943 g973 r982',
 'w75-232> r78 b82 b111 t114 g117 r127 b136 g145 o151 g172 g175 r187 g199 I159 g787-944< w958-1013{ r802 g808 b811 g829 b832.2 b886 r895 t905 r925 b928 o970 g973 r982 I911',
 'w75-226> r78 b82 b94 b111 o118 r124.2 b172 g175 r211 I153 r151 w787-946< g966-1037> g808 b811 b832.2 b871 b877 b880 r889 o892 b897 g928 r936 o973 r982 o1012.2 r1024',
 'g61-210< b82 o85 b111 r114 g117 g123 r127 o151 g175 g804-1025> b808 g811 g829 r844 b862 g868 b880 b886 t895 r900 r925 r936 o955 o970 g973 r982 I893 I911',
 'w75-226> b82 o85 b111 r114 g117 r127 o151 g175 w804-960> w969-1019} r804 g808 b811 g829 b832 b862 o865 b871 r886 r895 g928 r936 o970 r976.2 b985 I911',
 'w75-205> g78 b82 o85 g94 o109 g117 r127 b136 y175 w804-1013> b808 b832 t880 r889 d897 n900 g928 r936 o973 r976 g982 I908',
 'g61-218< r75 o82 b85.2 b111 r127.2 r136 t145 r148 o151 g166 r175.2 b217 g790-944< r804 b808 b820 b832 o841 b862 b880 r889 b895 r936 g940 I911'];
lower.forEach((t, i) => drawMarks(15 + i, 410, readRow(15 + i, 410, t).marks));

// Draws the recurrent variant columns that a row covers, then scattered mismatches.
function variants(row, spans, cols, lo, hi, density) {
  const y = ROW_TOP + row * ROW_PITCH;
  cols.forEach(([x, c, w, p]) => { if (inside(spans, x) && rnd() < p) rect(x, y, w, 12, COLORS[c]); });
  for (let x = lo; x < hi; x += Math.ceil(rnd() * density(x))) if (inside(spans, x)) {
    rect(x, y, rnd() < .15 ? 2 : 1, 12, COLORS['rrrrgggbbbboooot'[Math.floor(rnd() * 16)]], rnd() < .2 ? .55 : 0);
  }
}
const col = (origin, s) => s.split(' ').map(t => { const m = t.match(/([a-z])(\d+)(?:\.(\d))?(\*?)/); return [origin + Math.round(m[2] / 3), m[1], +(m[3] || 1), m[4] ? .4 : .95]; });

// Group at 232.3 - 234 kb.
const colsD = col(1110, 'b34 g45* o58 g125* o154* b175.1 g190* r200* o232* r265 r284* o306* o318 g360* b373* r379.1 g400* r415* b430* b442.1 g451* r502* o531 o540 o573 g591* o597* o606.3 r612 g624 r640 g655* b687 g702 r705* g726* b732.1 o735.1 o768 r783 g790* b811* b814 g834* g843 o858 r875* g889* r900* g937 r955* b969 b987 g1000* r1027* b1030* o1038 o1045* o1060 b1085* o1098 g1135 r1138* o1150* b1180* b1190* g1234* o1330 r1342 b1357 o1381 b1447* g1465*');
const upperD = [
 'w36-190< g190-485 w485-1427 g1431-1589> r51 g55 r60.2 r1385.2 g1435 r1452 g1474 I375 I636 I833 I912 I1172','g50-272 w272-1095 g1095-1215 g1218-1467 b505.3 I60 I375 I828 I1176','g52-560 w560-838 g838-990 w990-1183< g1183-1373 g1385-1592 o1565.2 r1569.2 t1575.2 b1590 I60 I375 I618','g52-345 w345-1150 g1150-1565> o88.3 o1120.9 I62 I375 I1174','g45-340{ w340-882 g885-1028 w1032-1220> g1220-1359 g1372-1440< o1075.3 I62 I375 I1174','w60-185 g185-440 w445-980 g980-1367 g1372-1440< d50.3 I58 I375 I970 I1172','w60-265 w275-335 g335-750 w748-1040{ g1040-1392 w1398-1558> o905.4 I62 I201 I375 I583 I1174','g50-315 w318-600 g600-748 w748-1017{ g1017-1524 I375 I770 I796 I1174','w50-320 w322-560 g560-855 w855-1015> g1015-1491 r858.3 I60 I375 I1174','w60-325 g330-560 w568-922 g922-1404 g1416-1575> b1420.2 g320.3 I62 I375','g52-535 w535-1078 g1080-1475> I375 I592 I833 I840 I965 I1055 I1062 I1176','w50-200{ g200-637 w640-1135 g1135-1296 w1300-1460> r1410.2 I62 I372 I969 I1176 I1182','g52-606 w610-1038 g1040-1476 b470.2 I62 I375 I790 I803','w52-190{ g190-335 w335-730< g730-1192 w1192-1340< g1340-1488 o584.9 o1211.3 I60 I201 I375 I1176','g50-485 w490-780 g780-925 w925-1078< g1078-1218 g1221-1393 w1393-1550> b65.4 I375 I1052 I1176','w50-190 g190-825 w829-1250 g1250-1407> g1417-1566< r1550.3 b70 I62 I990 I1172','w65-565 g565-711 w715-870 g870-1295 w1297-1496> b1284.2 I313 I375 I1172'];
const lowerD = [
 'w33-177 g177-612 w612-758 w762-905 g905-1296 g1302-1455> I345 I1380','w36-175 g175-325 w325-850 g850-1320> g1326-1470< g1332.2 I38 I345 I837 I918 I1023 I1145 I1346','w28-175 g175-460 w460-757< g757-1265 g1268-1428> g565.6 I33 I345 I582 I1145','w20-175< g177-322 g328-510 w510-660 g660-808 w810-1122 g1122-1262 w1265-1392> b30.3 I36 I345 I970 I1143','w30-165 g165-312< w318-512< w514-660 g660-803 w810-932 w960-1115< g1115-1443> k936 I33 I345 I1143','w20-165< g165-312 g320-550 w550-822 g822-965 w965-1418<> I34 I345 I588 I936 I1096 I1148 I1226','g33-548 w548-900< g900-1335 g1350-1418> I345 I651 I1145','g22-170< k177.4 g183-525 w525-825< g825-972 w972-1120 g1120-1415> I345 I918 I1145','g22-265< w268-805 g805-1302 I345 I936 I1146','g33-180 w180-325< g325-545 w547-970 w972-1120 g1120-1404 I345 I1143 I1218','w36-180 g182-471 g477-830 w830-980< g980-1095 w1095-1237 g1240-1425 g1431-1440 k1429 I345 I972 I1143 I1218','w36-182 g182-328 g332-687 w690-842 g842-1431> I345 I1143','g22-170< k177.4 g183-485 w485-927< g930-1323 I345 I1145','g22-238< g241-378 w380-518 g518-660< w663-810 g810-1352> n480.2 I345 I1143','g36-333 w333-478< g480-650 w652-805 g805-958 w962-1108 g1108-1250 w1252-1383 w1385-1486> I345 I1145','g36-185 w185-330< g330-472 w472-628< g628-1262 w1268-1411{ b708.3 k1192 I345 I777 I1145','g36-563 w565-775 g775-915 w918-1060{ g1060-1460> o57.3 I345 I778 I918 I1055 I1143','w42-265 g265-758 w760-910< g910-1311 k1166 k1212.3 I345 I924 I1143','g42-832 w835-1128 g1128-1359 r667.2 I345 I804 I924 I1148','g28-495< w498-1123< g1123-1265 w1268-1382 w1398-1445> r250.5 k1385.5 I345 I960 I1022 I1143','g42-790 w795-938< g940-1505> I180 I345 I801 I1143','w42-173 w185-820< g820-963 g972-1446 k177.3 I558 I588 I924 I1143','w42-190 w192-410> g410-555 w555-808 g808-955 w958-1105 g1105-1470> r58.2 b436.3 I345 I588 I1143','g42-188 w190-330 g330-480 w480-627{ g627-672 w673-1090 g1090-1474 g1479-1491 I342 I1143','g42-335 w340-595< w598-845 g845-990 w990-1048 g1048-1188 g1194-1353> I345 I558 I1143','w42-190 g190-522 w530-885 w885-1045< w1047-1185 w1185-1340<','g42-190 w193-457> g457-605 w605-972> g975-1262 w1264-1424> I345 I777 I1148'];
[...upperD.map(t => [1100, t]), ...lowerD.map(t => [1110, t])].forEach(([origin, t], row) => {
  const r = readRow(row, origin, t), y = r.y;
  variants(row, r.spans, colsD, 1118, 1600, x => x > 1285 && x < 1400 ? 20 : x > 1490 ? 60 : 38);
  [1319, 1417].forEach(x => { rect(x, y, 2, 12, rnd() < .5 ? '#b8b8b8' : '#fafafa'); rect(x - 1, y + 5, 2, 2, rnd() < .4 ? '#000' : '#999'); });
  drawMarks(row, origin, r.marks);
});
// Isolated reads on the far right.
readRow(0, 1690, 'g0-156>'); drawMarks(0, 1690, ['b33']);
readRow(0, 1832, 'g0-159<');
readRow(1, 1865, 'g0-108'); rect(1896, 291, 2, 2, '#888');

out += '<text x="177" y="238" font-size="8.5" font-family="Liberation Sans, Arial, sans-serif" textLength="31">[0 - 1629]</text>';
document.getElementById('tracks').innerHTML = out;
</script>
</body>
</html>
